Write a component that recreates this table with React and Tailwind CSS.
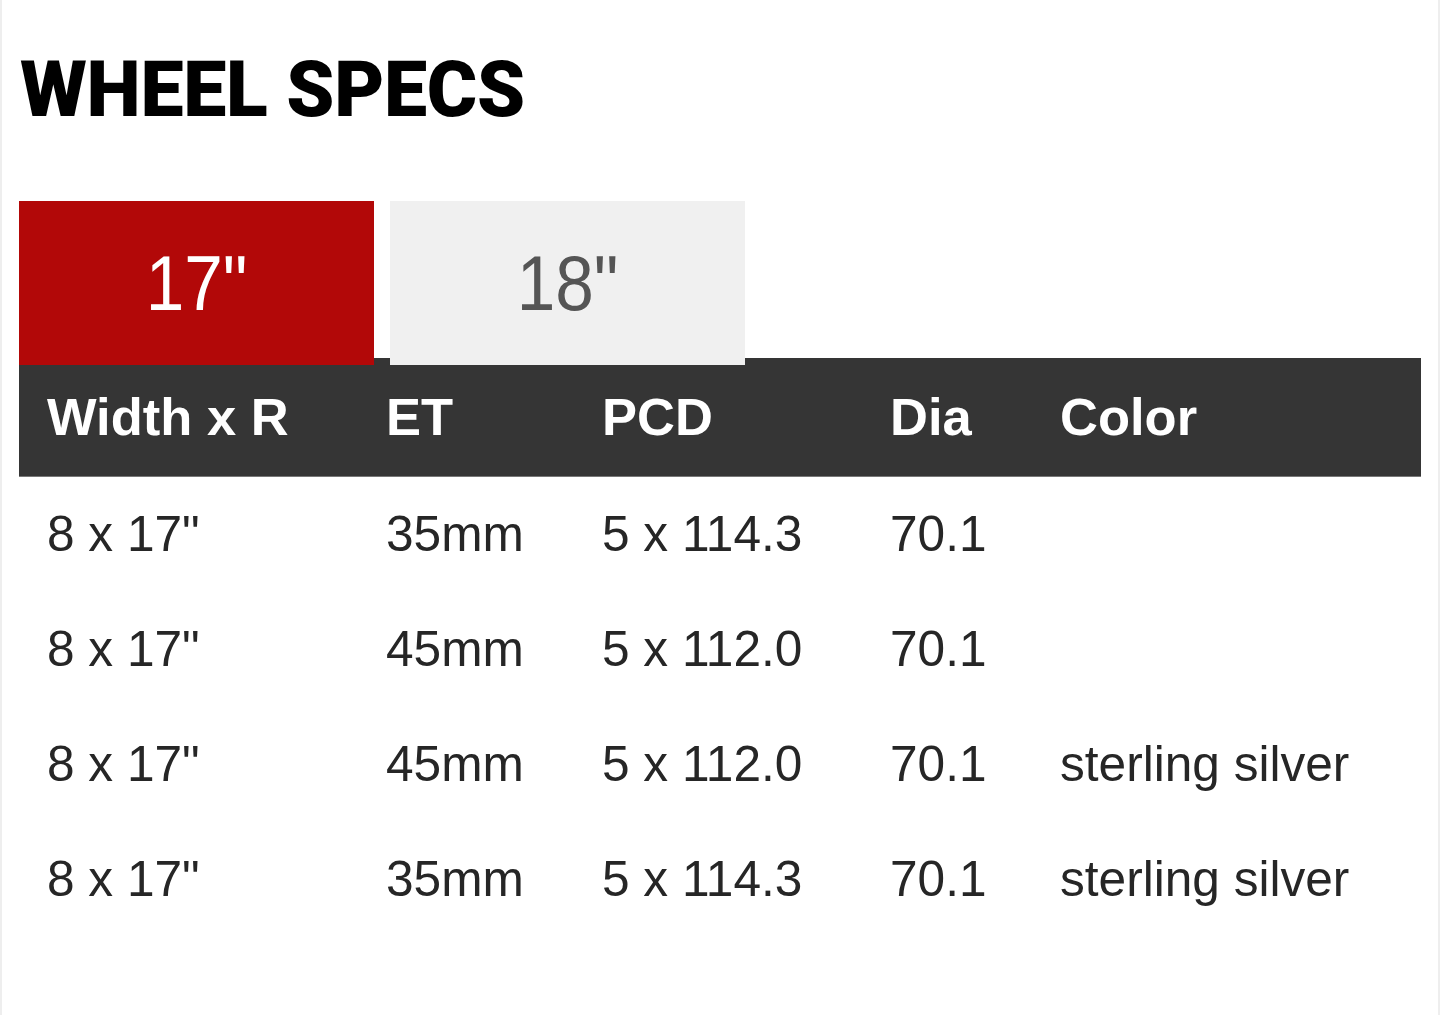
const rows = [
  { size: '8 x 17"', et: "35mm", pcd: "5 x 114.3", dia: "70.1", color: "" },
  { size: '8 x 17"', et: "45mm", pcd: "5 x 112.0", dia: "70.1", color: "" },
  { size: '8 x 17"', et: "45mm", pcd: "5 x 112.0", dia: "70.1", color: "sterling silver" },
  { size: '8 x 17"', et: "35mm", pcd: "5 x 114.3", dia: "70.1", color: "sterling silver" },
];

const cols = "grid grid-cols-[339px_216px_288px_170px_1fr]";

export default function App() {
  return (
    <div className="min-h-[1015px] bg-white border-x-2 border-[#eeeeee] px-[17px] font-['Liberation_Sans',Arial,sans-serif]">
      {/* titolo */}
      <h1 className="pt-[52px] pl-[1px] text-[77px] leading-none font-black tracking-[-0.3px] text-black font-['Roboto',sans-serif]">
        WHEEL SPECS
      </h1>

      {/* tab misure */}
      <div className="relative z-10 mt-[72px] flex gap-4">
        <button className="flex h-[164px] w-[355px] items-center justify-center bg-[#b20808] text-white">
          <span className="inline-block scale-x-90 text-[77px] leading-none">17"</span>
        </button>
        <button className="flex h-[164px] w-[355px] items-center justify-center bg-[#f0f0f0] text-[#555555]">
          <span className="inline-block scale-x-90 text-[77px] leading-none">18"</span>
        </button>
      </div>

      {/* tabella */}
      <div className="-mt-[7px]">
        <div className={`${cols} h-[119px] items-center bg-[#353535] border-b border-[#777] text-[52.5px] leading-none font-bold text-white`}>
          <div className="pl-7">Width x R</div>
          <div className="pl-7">ET</div>
          <div className="pl-7">PCD</div>
          <div className="pl-7">Dia</div>
          <div className="pl-7">Color</div>
        </div>
        {rows.map((r, i) => (
          <div key={i} className={`${cols} h-[115px] items-center text-[49.6px] leading-none text-[#262626]`}>
            <div className="pl-7">{r.size}</div>
            <div className="pl-7">{r.et}</div>
            <div className="pl-7">{r.pcd}</div>
            <div className="pl-7">{r.dia}</div>
            <div className="pl-7">{r.color}</div>
          </div>
        ))}
      </div>
    </div>
  );
}
